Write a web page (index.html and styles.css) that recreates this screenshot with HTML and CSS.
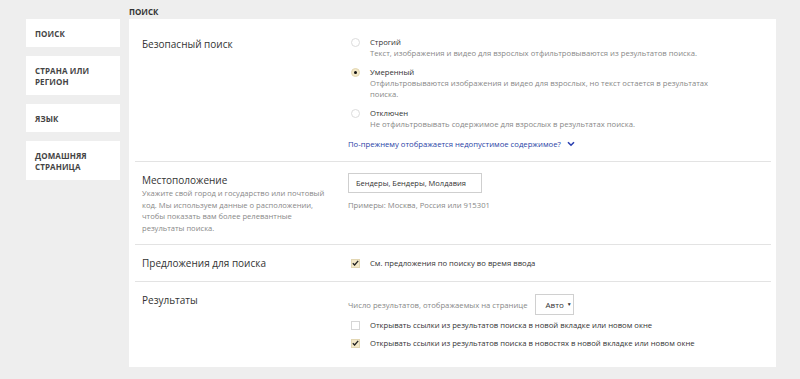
FILE: index.html
```html
<!DOCTYPE html>
<html lang="ru">
<head>
<meta charset="utf-8">
<title>Поиск</title>
<link rel="stylesheet" href="styles.css">
</head>
<body>
<div class="page">
  <nav class="sidebar">
    <div class="nav-item">ПОИСК</div>
    <div class="nav-item">СТРАНА ИЛИ<br>РЕГИОН</div>
    <div class="nav-item">ЯЗЫК</div>
    <div class="nav-item">ДОМАШНЯЯ<br>СТРАНИЦА</div>
  </nav>
  <main class="content">
    <div class="title">ПОИСК</div>
    <div class="panel">
      <section class="row row-safe">
        <div class="left"><h2 class="heading">Безопасный поиск</h2></div>
        <div class="right">
          <div class="option">
            <span class="radio"></span>
            <div class="opt-text">
              <div class="label">Строгий</div>
              <div class="desc">Текст, изображения и видео для взрослых отфильтровываются из результатов поиска.</div>
            </div>
          </div>
          <div class="option">
            <span class="radio checked"></span>
            <div class="opt-text">
              <div class="label">Умеренный</div>
              <div class="desc">Отфильтровываются изображения и видео для взрослых, но текст остается в результатах поиска.</div>
            </div>
          </div>
          <div class="option">
            <span class="radio"></span>
            <div class="opt-text">
              <div class="label">Отключен</div>
              <div class="desc">Не отфильтровывать содержимое для взрослых в результатах поиска.</div>
            </div>
          </div>
          <div class="link">По-прежнему отображается недопустимое содержимое?
            <svg class="chev" width="8" height="6" viewBox="0 0 8 6"><path d="M1 1.2 L4 4.2 L7 1.2" fill="none" stroke="#2a3fb0" stroke-width="1.6"/></svg>
          </div>
        </div>
      </section>
      <section class="row row-loc">
        <div class="left">
          <h2 class="heading">Местоположение</h2>
          <p class="left-desc">Укажите свой город и государство или почтовый код. Мы используем данные о расположении, чтобы показать вам более релевантные результаты поиска.</p>
        </div>
        <div class="right">
          <div class="input">Бендеры, Бендеры, Молдавия</div>
          <div class="hint">Примеры: Москва, Россия или 915301</div>
        </div>
      </section>
      <section class="row row-sugg">
        <div class="left"><h2 class="heading">Предложения для поиска</h2></div>
        <div class="right">
          <div class="check-row"><span class="checkbox checked"><svg width="7" height="6" viewBox="0 0 7 6"><path d="M0.8 3.2 L2.6 5 L6.2 0.8" fill="none" stroke="#222" stroke-width="1.3"/></svg></span><span class="label">См. предложения по поиску во время ввода</span></div>
        </div>
      </section>
      <section class="row row-res">
        <div class="left"><h2 class="heading">Результаты</h2></div>
        <div class="right">
          <div class="count-row"><span class="hint-inline">Число результатов, отображаемых на странице</span><span class="select">Авто <span class="caret">▼</span></span></div>
          <div class="check-row"><span class="checkbox"></span><span class="label">Открывать ссылки из результатов поиска в новой вкладке или новом окне</span></div>
          <div class="check-row"><span class="checkbox checked"><svg width="7" height="6" viewBox="0 0 7 6"><path d="M0.8 3.2 L2.6 5 L6.2 0.8" fill="none" stroke="#222" stroke-width="1.3"/></svg></span><span class="label">Открывать ссылки из результатов поиска в новостях в новой вкладке или новом окне</span></div>
        </div>
      </section>
    </div>
  </main>
</div>
</body>
</html>
```

FILE: styles.css
```css
* { box-sizing: border-box; }
html, body { margin: 0; padding: 0; }
body {
  background: #eeeeee;
  font-family: "Open Sans", "Noto Sans", sans-serif;
  color: #333;
  width: 800px;
  height: 379px;
  overflow: hidden;
}
.page {
  display: flex;
  gap: 9px;
  padding-left: 26px;
}
.sidebar {
  width: 94px;
  padding-top: 19px;
  display: flex;
  flex-direction: column;
  gap: 9px;
}
.nav-item {
  background: #fff;
  padding: 9px 6px 8px 9px;
  font-size: 8px;
  line-height: 11px;
  font-weight: 700;
  color: #444;
  letter-spacing: 0.1px;
}
.content {
  width: 647px;
}
.title {
  height: 19px;
  font-size: 8px;
  font-weight: 700;
  line-height: 24px;
  color: #333;
}
.panel {
  background: #fff;
  padding: 0 5px 0 6px;
}
.row {
  display: flex;
  border-bottom: 1px solid #e3e3e3;
}
.row:last-child { border-bottom: none; }
.left {
  width: 213px;
  padding-left: 7px;
}
.right { flex: 1; }
.heading {
  margin: 0;
  font-size: 10px;
  line-height: 16px;
  font-weight: 400;
  color: #333;
}
.row-safe { padding: 17px 0 11px; }
.option {
  display: flex;
  margin-bottom: 7px;
}
.radio {
  width: 9px;
  height: 9px;
  border: 1px solid #dcdcdc;
  border-radius: 50%;
  margin: 2px 10px 0 3px;
  flex: none;
  position: relative;
  background: #fff;
}
.radio.checked {
  background: #f3e8c8;
  border-color: #e2d6b2;
}
.radio.checked::after {
  content: "";
  position: absolute;
  left: 2px;
  top: 2px;
  width: 3px;
  height: 3px;
  border-radius: 50%;
  background: #111;
}
.label {
  font-size: 7.7px;
  line-height: 12px;
  color: #333;
}
.desc {
  font-size: 7.7px;
  line-height: 11px;
  color: #888;
  width: 350px;
}
.link {
  font-size: 7.7px;
  line-height: 12px;
  color: #2a3fa6;
  display: flex;
  align-items: center;
  gap: 6px;
  margin-top: 8px;
}
.chev { flex: none; }
.row-loc { padding: 10px 0 10px; }
.left-desc {
  margin: 0;
  font-size: 7.6px;
  line-height: 11.5px;
  color: #888;
  width: 189px;
}
.row-loc .right { padding-top: 1px; }
.input {
  width: 134px;
  height: 20px;
  border: 1px solid #cfcfcf;
  font-size: 7.5px;
  line-height: 18px;
  padding-left: 7px;
  color: #333;
}
.hint {
  margin-top: 6px;
  font-size: 7.7px;
  line-height: 12px;
  color: #888;
}
.row-sugg { padding: 10px 0 10px; }
.row-sugg .right { padding-top: 2px; }
.check-row {
  display: flex;
  align-items: center;
}
.checkbox {
  width: 9px;
  height: 9px;
  border: 1px solid #d6d6d6;
  background: #fff;
  margin: 0 10px 0 3px;
  flex: none;
  display: flex;
  align-items: center;
  justify-content: center;
}
.checkbox.checked {
  background: #f3e8c8;
  border-color: #e2d6b2;
}
.row-res { padding: 10px 0 18px; }
.row-res .right { padding-top: 2px; }
.count-row {
  display: flex;
  align-items: center;
  gap: 8px;
  margin-bottom: 4px;
}
.hint-inline {
  font-size: 7.7px;
  color: #888;
}
.select {
  width: 39px;
  height: 21px;
  border: 1px solid #d0d0d0;
  font-size: 8px;
  line-height: 19px;
  padding-left: 9px;
  color: #333;
}
.caret {
  font-size: 5px;
  vertical-align: 2px;
  margin-left: 1px;
}
.row-res .check-row + .check-row { margin-top: 6px; }
```
